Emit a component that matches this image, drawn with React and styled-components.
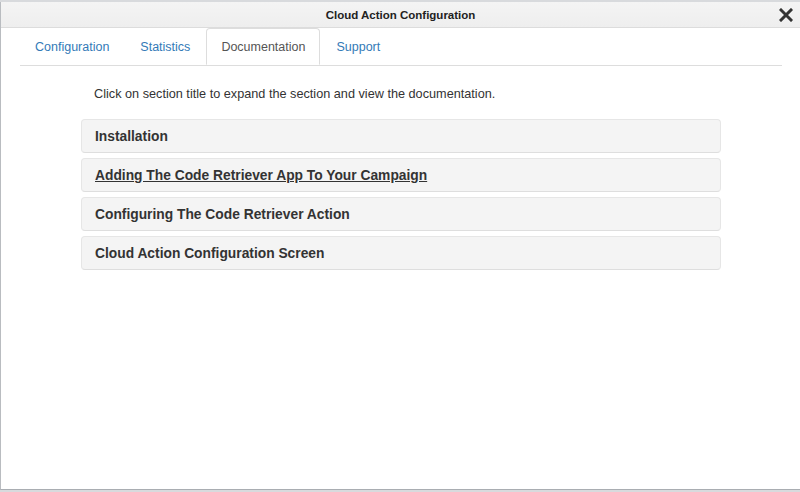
import React, { useState } from 'react';
import styled, { createGlobalStyle } from 'styled-components';

const GlobalStyle = createGlobalStyle`
    html, body {
        margin: 0;
        padding: 0;
        background: #cfd2d6;
        font-family: "Liberation Sans", Arial, Helvetica, sans-serif;
    }
`;

const Dialog = styled.div`
    width: 800px;
    height: 492px;
    box-sizing: border-box;
    padding-top: 2px;
    padding-bottom: 2px;
    display: flex;
    flex-direction: column;
    background: #d8dadd;
`;

const Window = styled.div`
    flex: 1;
    display: flex;
    flex-direction: column;
    background: #fff;
    border-left: 1px solid #b9bcc0;
    border-bottom: 1px solid #a9adb2;
`;

const TitleBar = styled.div`
    position: relative;
    height: 25px;
    display: flex;
    align-items: center;
    justify-content: center;
    background: linear-gradient(#f4f4f4, #eeeeee);
    border-bottom: 1px solid #dcdcdc;
    font-size: 11.5px;
    font-weight: bold;
    color: #222;
`;

const CloseButton = styled.button`
    position: absolute;
    right: 6px;
    top: 5px;
    width: 16px;
    height: 16px;
    padding: 0;
    border: none;
    background: transparent;
    cursor: pointer;
    display: flex;
    align-items: center;
    justify-content: center;
`;

const Body = styled.div`
    padding: 0 18px 0 19px;
`;

const Tabs = styled.div`
    display: flex;
    height: 37px;
    border-bottom: 1px solid #ddd;
`;

const Tab = styled.button`
    margin-right: 1px;
    margin-bottom: -1px;
    padding: 0 14px;
    height: 37px;
    font-family: inherit;
    font-size: 12.5px;
    color: ${({ active }) => (active ? '#555' : '#337ab7')};
    background: #fff;
    border: 1px solid ${({ active }) => (active ? '#ddd' : 'transparent')};
    border-bottom-color: ${({ active }) => (active ? '#fff' : 'transparent')};
    border-radius: 4px 4px 0 0;
    cursor: pointer;
`;

const Content = styled.div`
    width: 640px;
    margin: 0 auto;
    padding-top: 20px;
`;

const Intro = styled.p`
    margin: 0 0 17px 13px;
    font-size: 12.7px;
    line-height: 16px;
    color: #333;
`;

const Sections = styled.div`
    display: flex;
    flex-direction: column;
    gap: 5px;
`;

const Section = styled.div`
    height: 34px;
    box-sizing: border-box;
    display: flex;
    align-items: center;
    padding: 0 13px;
    background: #f4f4f4;
    border: 1px solid #e6e6e6;
    border-bottom-color: #dedede;
    border-radius: 4px;
    font-size: 13.8px;
    font-weight: bold;
    color: #333;
    text-decoration: ${({ hover }) => (hover ? 'underline' : 'none')};
    cursor: pointer;
`;

const tabs = ['Configuration', 'Statistics', 'Documentation', 'Support'];

const sections = [
    'Installation',
    'Adding The Code Retriever App To Your Campaign',
    'Configuring The Code Retriever Action',
    'Cloud Action Configuration Screen',
];

export default function App() {
    const [currentTab, setCurrentTab] = useState('Documentation');
    const [hovered, setHovered] = useState(1);

    return (
        <>
            <GlobalStyle />
            <Dialog>
                <Window>
                    <TitleBar>
                        Cloud Action Configuration
                        <CloseButton aria-label="Close">
                            <svg width="14" height="14" viewBox="0 0 14 14">
                                <path d="M2 2 L12 12 M12 2 L2 12" stroke="#333" strokeWidth="3" strokeLinecap="square" />
                            </svg>
                        </CloseButton>
                    </TitleBar>
                    <Body>
                        <Tabs>
                            {tabs.map((t) => (
                                <Tab key={t} active={currentTab === t} onClick={() => setCurrentTab(t)}>
                                    {t}
                                </Tab>
                            ))}
                        </Tabs>
                        <Content>
                            <Intro>Click on section title to expand the section and view the documentation.</Intro>
                            <Sections>
                                {sections.map((s, i) => (
                                    <Section
                                        key={s}
                                        hover={hovered === i}
                                        onMouseEnter={() => setHovered(i)}
                                    >
                                        {s}
                                    </Section>
                                ))}
                            </Sections>
                        </Content>
                    </Body>
                </Window>
            </Dialog>
        </>
    );
}
